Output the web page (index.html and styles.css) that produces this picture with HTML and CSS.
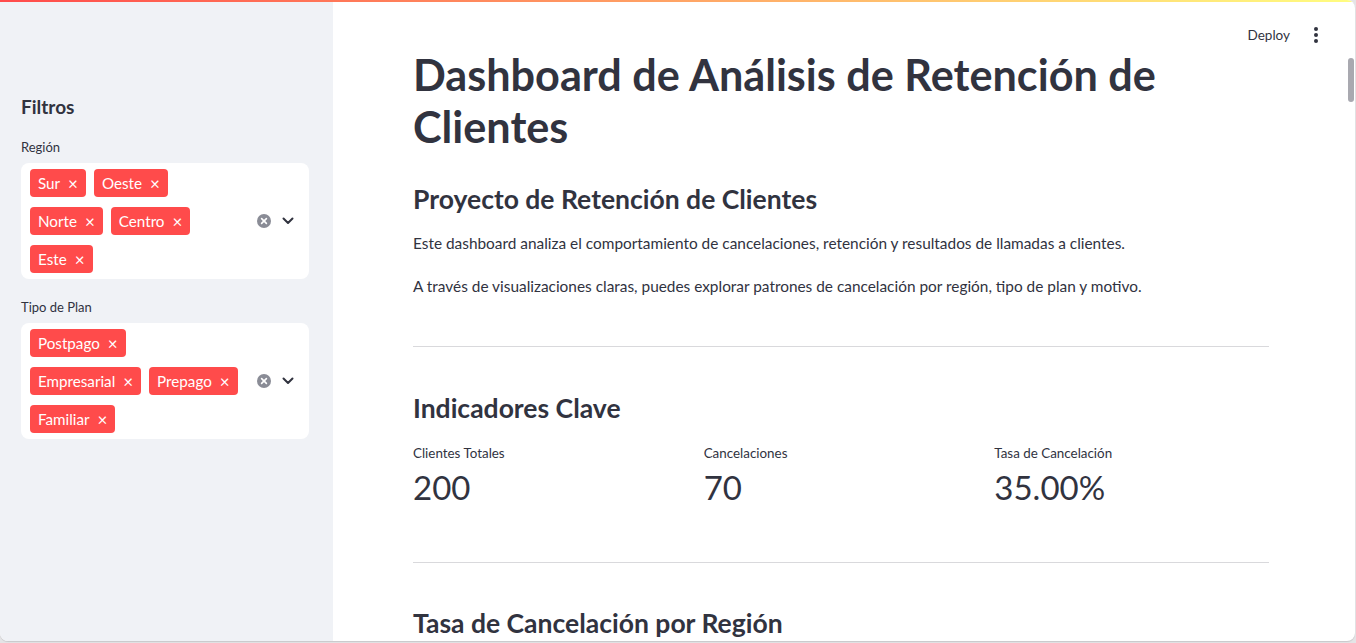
FILE: index.html
```html
<!DOCTYPE html>
<html lang="es">
<head>
<meta charset="utf-8">
<title>Dashboard de Análisis de Retención de Clientes</title>
<link rel="stylesheet" href="styles.css">
</head>
<body>
<div class="app">
  <div class="decoration"></div>
  <aside class="sidebar">
    <h2 class="side-title">Filtros</h2>
    <div class="field">
      <label class="field-label">Región</label>
      <div class="multiselect">
        <div class="tags">
          <div class="tag-row">
            <span class="tag">Sur<span class="x">×</span></span>
            <span class="tag">Oeste<span class="x">×</span></span>
          </div>
          <div class="tag-row">
            <span class="tag">Norte<span class="x">×</span></span>
            <span class="tag">Centro<span class="x">×</span></span>
          </div>
          <div class="tag-row">
            <span class="tag">Este<span class="x">×</span></span>
          </div>
        </div>
        <div class="controls">
          <svg class="clear" width="14" height="14" viewBox="0 0 14 14"><circle cx="7" cy="7" r="7" fill="#8a8c96"/><path d="M4.6 4.6 L9.4 9.4 M9.4 4.6 L4.6 9.4" stroke="#fff" stroke-width="1.6" stroke-linecap="round"/></svg>
          <svg class="chev" width="12" height="8" viewBox="0 0 12 8"><path d="M1.5 1.5 L6 6 L10.5 1.5" fill="none" stroke="#31333f" stroke-width="2" stroke-linecap="round" stroke-linejoin="round"/></svg>
        </div>
      </div>
    </div>
    <div class="field">
      <label class="field-label">Tipo de Plan</label>
      <div class="multiselect">
        <div class="tags">
          <div class="tag-row">
            <span class="tag">Postpago<span class="x">×</span></span>
          </div>
          <div class="tag-row">
            <span class="tag">Empresarial<span class="x">×</span></span>
            <span class="tag">Prepago<span class="x">×</span></span>
          </div>
          <div class="tag-row">
            <span class="tag">Familiar<span class="x">×</span></span>
          </div>
        </div>
        <div class="controls">
          <svg class="clear" width="14" height="14" viewBox="0 0 14 14"><circle cx="7" cy="7" r="7" fill="#8a8c96"/><path d="M4.6 4.6 L9.4 9.4 M9.4 4.6 L4.6 9.4" stroke="#fff" stroke-width="1.6" stroke-linecap="round"/></svg>
          <svg class="chev" width="12" height="8" viewBox="0 0 12 8"><path d="M1.5 1.5 L6 6 L10.5 1.5" fill="none" stroke="#31333f" stroke-width="2" stroke-linecap="round" stroke-linejoin="round"/></svg>
        </div>
      </div>
    </div>
  </aside>
  <main class="main">
    <header class="topbar">
      <span class="deploy">Deploy</span>
      <span class="kebab"><i></i><i></i><i></i></span>
    </header>
    <div class="scrollthumb"></div>
    <div class="block">
      <h1 class="title">Dashboard de Análisis de Retención de Clientes</h1>
      <h3 class="h3 first">Proyecto de Retención de Clientes</h3>
      <p class="p1">Este dashboard analiza el comportamiento de cancelaciones, retención y resultados de llamadas a clientes.</p>
      <p class="p2">A través de visualizaciones claras, puedes explorar patrones de cancelación por región, tipo de plan y motivo.</p>
      <hr class="rule r1">
      <h3 class="h3 kpi-title">Indicadores Clave</h3>
      <div class="metrics">
        <div class="metric"><div class="m-label">Clientes Totales</div><div class="m-value">200</div></div>
        <div class="metric"><div class="m-label">Cancelaciones</div><div class="m-value">70</div></div>
        <div class="metric"><div class="m-label">Tasa de Cancelación</div><div class="m-value">35.00%</div></div>
      </div>
      <hr class="rule r2">
      <h3 class="h3 region-title">Tasa de Cancelación por Región</h3>
    </div>
  </main>
</div>
</body>
</html>
```

FILE: styles.css
```css
* { box-sizing: border-box; }
html, body { margin: 0; padding: 0; }
body {
  background: #e4e4e6;
  font-family: "Lato", "Source Sans Pro", sans-serif;
  color: #31333f;
  width: 1356px;
  height: 643px;
  overflow: hidden;
}
.app {
  position: relative;
  width: 1355px;
  height: 641px;
  display: flex;
  border-radius: 0 8px 8px 8px;
  overflow: hidden;
  background: #fff;
  box-shadow: 0 1px 1px rgba(0,0,0,0.12);
}
.decoration {
  position: absolute;
  top: 0; left: 0; right: 0;
  height: 2px;
  background: linear-gradient(90deg, #ff4b4b, #fffd80);
  z-index: 5;
}
.sidebar {
  width: 333px;
  flex: none;
  background: #f0f2f6;
  padding: 95px 24px 0 21px;
}
.side-title {
  margin: 0;
  font-size: 19px;
  font-weight: 700;
  line-height: 24px;
}
.field { margin-top: 18px; }
.field + .field { margin-top: 18px; }
.field-label {
  display: block;
  font-size: 13px;
  line-height: 20px;
  margin-bottom: 6px;
}
.multiselect {
  background: #fff;
  border-radius: 8px;
  padding: 6px 15px 6px 9px;
  display: flex;
  align-items: center;
}
.tags {
  flex: 1;
  display: flex;
  flex-direction: column;
  gap: 10px;
}
.tag-row { display: flex; gap: 8px; }
.tag {
  display: inline-flex;
  align-items: center;
  height: 28px;
  padding: 0 8px 0 8px;
  background: #ff4b4b;
  color: #fff;
  border-radius: 4px;
  font-size: 15.2px;
}
.tag .x {
  margin-left: 8px;
  font-size: 17px;
  line-height: 1;
}
.controls {
  display: flex;
  align-items: center;
  gap: 11px;
}
.clear { display: block; }
.chev { display: block; }
.main {
  flex: 1;
  position: relative;
}
.topbar {
  position: absolute;
  top: 25px;
  right: 37px;
  display: flex;
  align-items: center;
  gap: 24px;
  height: 20px;
}
.deploy { font-size: 13.5px; }
.kebab {
  display: flex;
  flex-direction: column;
  gap: 2px;
}
.kebab i {
  display: block;
  width: 4px; height: 4px;
  border-radius: 50%;
  background: #31333f;
}
.scrollthumb {
  position: absolute;
  right: 1px;
  top: 58px;
  width: 6px;
  height: 44px;
  border-radius: 3px;
  background: #a9a9b0;
}
.block {
  width: 856px;
  margin-left: 80px;
  padding-top: 48px;
}
.title {
  margin: 0;
  font-size: 43.2px;
  line-height: 52px;
  font-weight: 700;
}
.h3 {
  margin: 0;
  font-size: 26.5px;
  line-height: 36px;
  font-weight: 700;
}
.first { margin-top: 29px; }
.p1, .p2 {
  margin: 0;
  font-size: 15.4px;
  line-height: 26px;
}
.p1 { margin-top: 13px; }
.p2 { margin-top: 17px; }
.rule {
  border: 0;
  border-top: 1px solid #d9d9dc;
  margin: 0;
}
.r1 { margin-top: 47px; }
.kpi-title { margin-top: 43px; }
.metrics {
  display: grid;
  grid-template-columns: repeat(3, 1fr);
  column-gap: 16px;
  margin-top: 17px;
}
.m-label { font-size: 13.4px; line-height: 20px; }
.m-value { font-size: 33px; line-height: 44px; margin-top: 2px; }
.r2 { margin-top: 53px; }
.region-title { margin-top: 42px; }
```
